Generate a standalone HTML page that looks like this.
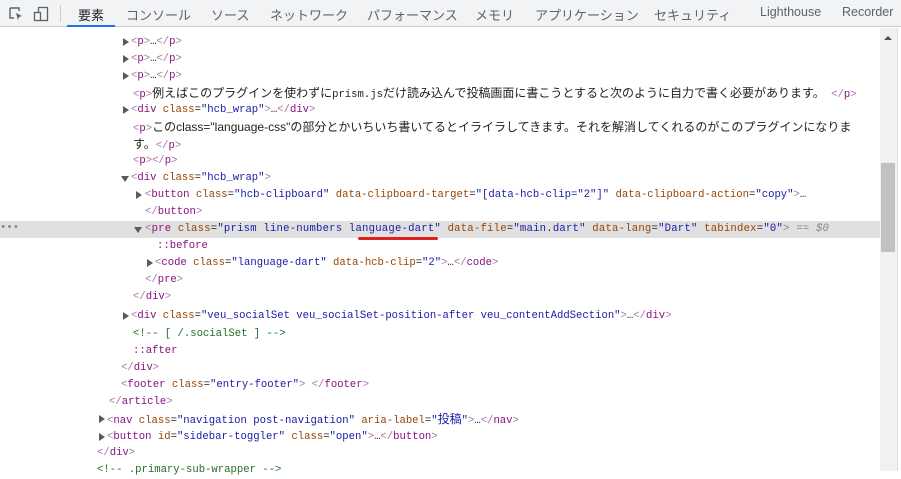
<!DOCTYPE html>
<html><head><meta charset="utf-8"><style>
body{margin:0;width:901px;height:471px;overflow:hidden;background:#fff;position:relative;font-family:"Liberation Sans","Noto Sans CJK JP",sans-serif}
.tb{position:absolute;left:0;top:0;width:901px;height:27px;background:#f1f3f4;border-bottom:1px solid #cbcdd1;box-sizing:border-box}
.tab{position:absolute;top:5px;font-size:13px;color:#5f6368;white-space:nowrap}
.l{position:absolute;height:17px;line-height:17px;font-family:"Liberation Mono","Noto Sans CJK JP",monospace;font-size:10.6px;white-space:nowrap;color:#222}
.t{color:#881280}.b{color:#a5779f}.a{color:#994500}.v{color:#1a1aa6}.c{color:#236e25}.g{color:#888}
.tri{position:absolute;width:0;height:0;border-top:4px solid transparent;border-bottom:4px solid transparent;border-left:6px solid #5a5a5a}
.trd{position:absolute;width:0;height:0;border-left:4px solid transparent;border-right:4px solid transparent;border-top:6px solid #5a5a5a}
.jp{font-family:"Liberation Sans","Noto Sans CJK JP",sans-serif;font-size:12px;line-height:17px}
</style></head><body>
<div class="tb">
<svg style="position:absolute;left:9px;top:7px" width="14" height="14"><path d="M1 1h9v3M1 1v10h4" fill="none" stroke="#5f6368" stroke-width="1.4"/><path d="M7 6l6 3-3 1-1 3z" fill="#5f6368"/></svg>
<svg style="position:absolute;left:33px;top:6px" width="16" height="16"><rect x="5.5" y="1.5" width="9" height="13" fill="none" stroke="#5f6368" stroke-width="1.3"/><rect x="1.5" y="6.5" width="6" height="8" fill="#f1f3f4" stroke="#5f6368" stroke-width="1.3"/></svg>
<div style="position:absolute;left:60px;top:5px;width:1px;height:17px;background:#ccc"></div>
<div class="tab" style="left:78px;color:#202124">要素</div>
<div style="position:absolute;left:67px;top:25px;width:48px;height:2px;background:#1a73e8"></div>
<div class="tab" style="left:126px">コンソール</div>
<div class="tab" style="left:211px">ソース</div>
<div class="tab" style="left:270px">ネットワーク</div>
<div class="tab" style="left:367px">パフォーマンス</div>
<div class="tab" style="left:475px">メモリ</div>
<div class="tab" style="left:535px">アプリケーション</div>
<div class="tab" style="left:654px">セキュリティ</div>
<div class="tab" style="left:760px;font-size:12.5px">Lighthouse</div>
<div class="tab" style="left:842px;font-size:12.5px">Recorder</div>
</div>
<div style="position:absolute;left:880px;top:28px;width:17px;height:443px;background:#f1f1f1"></div>
<div style="position:absolute;left:881px;top:163px;width:14px;height:89px;background:#c1c1c1"></div>
<div style="position:absolute;left:884px;top:36px;width:0;height:0;border-left:4px solid transparent;border-right:4px solid transparent;border-bottom:4px solid #505050"></div>
<div style="position:absolute;left:897px;top:28px;width:1px;height:443px;background:#ddd"></div>
<div style="position:absolute;left:0;top:221px;width:880px;height:17px;background:#e0e0e0"></div>
<div class="l g" style="left:0;top:220px">•••</div>

<div class="tri" style="left:123px;top:38px"></div><div class="l" style="left:131px;top:34px"><span class="b">&lt;</span><span class="t">p</span><span class="b">&gt;</span>…<span class="b">&lt;/</span><span class="t">p</span><span class="b">&gt;</span></div>
<div class="tri" style="left:123px;top:55px"></div><div class="l" style="left:131px;top:51px"><span class="b">&lt;</span><span class="t">p</span><span class="b">&gt;</span>…<span class="b">&lt;/</span><span class="t">p</span><span class="b">&gt;</span></div>
<div class="tri" style="left:123px;top:72px"></div><div class="l" style="left:131px;top:68px"><span class="b">&lt;</span><span class="t">p</span><span class="b">&gt;</span>…<span class="b">&lt;/</span><span class="t">p</span><span class="b">&gt;</span></div>
<div class="l" style="left:133px;top:85px"><span class="b">&lt;</span><span class="t">p</span><span class="b">&gt;</span><span class="jp">例えばこのプラグインを使わずに</span>prism.js<span class="jp">だけ読み込んで投稿画面に書こうとすると次のように自力で書く必要があります。</span> <span class="b">&lt;/</span><span class="t">p</span><span class="b">&gt;</span></div>
<div class="tri" style="left:123px;top:106px"></div><div class="l" style="left:131px;top:102px"><span class="b">&lt;</span><span class="t">div</span> <span class="a">class</span>=<span class="v">"hcb_wrap"</span><span class="b">&gt;</span>…<span class="b">&lt;/</span><span class="t">div</span><span class="b">&gt;</span></div>
<div class="l" style="left:133px;top:119px"><span class="b">&lt;</span><span class="t">p</span><span class="b">&gt;</span><span class="jp">このclass="language-css"の部分とかいちいち書いてるとイライラしてきます。それを解消してくれるのがこのプラグインになりま</span></div>
<div class="l" style="left:133px;top:136px"><span class="jp">す。</span><span class="b">&lt;/</span><span class="t">p</span><span class="b">&gt;</span></div>
<div class="l" style="left:133px;top:153px"><span class="b">&lt;</span><span class="t">p</span><span class="b">&gt;</span><span class="b">&lt;/</span><span class="t">p</span><span class="b">&gt;</span></div>
<div class="trd" style="left:121px;top:176px"></div><div class="l" style="left:131px;top:170px"><span class="b">&lt;</span><span class="t">div</span> <span class="a">class</span>=<span class="v">"hcb_wrap"</span><span class="b">&gt;</span></div>
<div class="tri" style="left:136px;top:191px"></div><div class="l" style="left:145px;top:187px"><span class="b">&lt;</span><span class="t">button</span> <span class="a">class</span>=<span class="v">"hcb-clipboard"</span> <span class="a">data-clipboard-target</span>=<span class="v">"[data-hcb-clip="2"]"</span> <span class="a">data-clipboard-action</span>=<span class="v">"copy"</span><span class="b">&gt;</span>…</div>
<div class="l" style="left:145px;top:204px"><span class="b">&lt;/</span><span class="t">button</span><span class="b">&gt;</span></div>
<div class="trd" style="left:134px;top:227px"></div><div class="l" style="left:145px;top:221px;letter-spacing:0.22px"><span class="b">&lt;</span><span class="t">pre</span> <span class="a">class</span>=<span class="v">"prism line-numbers language-dart"</span> <span class="a">data-file</span>=<span class="v">"main.dart"</span> <span class="a">data-lang</span>=<span class="v">"Dart"</span> <span class="a">tabindex</span>=<span class="v">"0"</span><span class="b">&gt;</span> <span class="g">== <i>$0</i></span></div>
<div style="position:absolute;left:358px;top:237px;width:80px;height:3px;background:#e02020;border-radius:2px"></div>
<div class="l" style="left:157px;top:238px;color:#881280">::before</div>
<div class="tri" style="left:147px;top:259px"></div><div class="l" style="left:155px;top:255px"><span class="b">&lt;</span><span class="t">code</span> <span class="a">class</span>=<span class="v">"language-dart"</span> <span class="a">data-hcb-clip</span>=<span class="v">"2"</span><span class="b">&gt;</span>…<span class="b">&lt;/</span><span class="t">code</span><span class="b">&gt;</span></div>
<div class="l" style="left:145px;top:272px"><span class="b">&lt;/</span><span class="t">pre</span><span class="b">&gt;</span></div>
<div class="l" style="left:133px;top:289px"><span class="b">&lt;/</span><span class="t">div</span><span class="b">&gt;</span></div>
<div class="tri" style="left:123px;top:312px"></div><div class="l" style="left:131px;top:308px"><span class="b">&lt;</span><span class="t">div</span> <span class="a">class</span>=<span class="v">"veu_socialSet veu_socialSet-position-after veu_contentAddSection"</span><span class="b">&gt;</span>…<span class="b">&lt;/</span><span class="t">div</span><span class="b">&gt;</span></div>
<div class="l c" style="left:133px;top:326px">&lt;!-- [ /.socialSet ] --&gt;</div>
<div class="l" style="left:133px;top:343px;color:#881280">::after</div>
<div class="l" style="left:121px;top:360px"><span class="b">&lt;/</span><span class="t">div</span><span class="b">&gt;</span></div>
<div class="l" style="left:121px;top:377px"><span class="b">&lt;</span><span class="t">footer</span> <span class="a">class</span>=<span class="v">"entry-footer"</span><span class="b">&gt;</span> <span class="b">&lt;/</span><span class="t">footer</span><span class="b">&gt;</span></div>
<div class="l" style="left:109px;top:394px"><span class="b">&lt;/</span><span class="t">article</span><span class="b">&gt;</span></div>
<div class="tri" style="left:99px;top:415px"></div><div class="l" style="left:107px;top:411px"><span class="b">&lt;</span><span class="t">nav</span> <span class="a">class</span>=<span class="v">"navigation post-navigation"</span> <span class="a">aria-label</span>=<span class="v">"<span class="jp">投稿</span>"</span><span class="b">&gt;</span>…<span class="b">&lt;/</span><span class="t">nav</span><span class="b">&gt;</span></div>
<div class="tri" style="left:99px;top:433px"></div><div class="l" style="left:107px;top:429px"><span class="b">&lt;</span><span class="t">button</span> <span class="a">id</span>=<span class="v">"sidebar-toggler"</span> <span class="a">class</span>=<span class="v">"open"</span><span class="b">&gt;</span>…<span class="b">&lt;/</span><span class="t">button</span><span class="b">&gt;</span></div>
<div class="l" style="left:97px;top:445px"><span class="b">&lt;/</span><span class="t">div</span><span class="b">&gt;</span></div>
<div class="l c" style="left:97px;top:462px">&lt;!-- .primary-sub-wrapper --&gt;</div>
</body></html>
